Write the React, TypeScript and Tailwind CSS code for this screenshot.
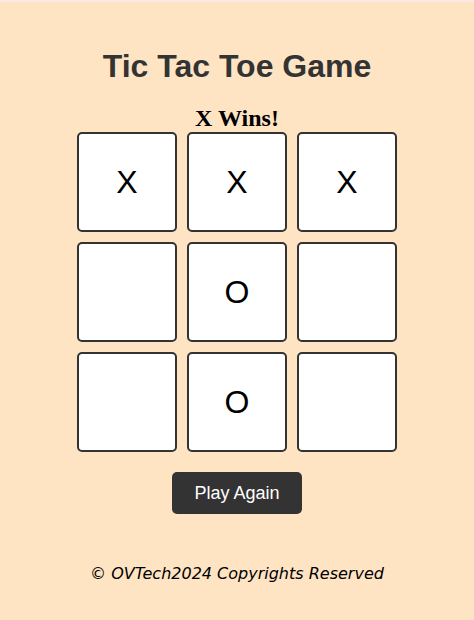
import React from "react";

const board = ["X", "X", "X", "", "O", "", "", "O", ""];

export default function App() {
  return (
    <div className="min-h-[620px] bg-[#ffe4c4] font-['Liberation_Sans',Arial,sans-serif]">
      <div className="h-[2px] bg-[#fbe7e3]" />
      <div className="flex flex-col items-center pt-[44px]">
        <h1 className="text-[32px] leading-[40px] font-bold text-[#333]">Tic Tac Toe Game</h1>
        <h2 className="mt-[18px] text-[24px] leading-[28px] font-bold text-black font-['Liberation_Serif','Times_New_Roman',serif]">
          X Wins!
        </h2>
        <div className="grid grid-cols-[repeat(3,100px)] gap-[10px]">
          {board.map((v, i) => (
            <div
              key={i}
              className="w-[100px] h-[100px] bg-white border-2 border-[#333] rounded-[5px] flex items-center justify-center text-[32px] text-black"
            >
              {v}
            </div>
          ))}
        </div>
        <button className="mt-[20px] h-[42px] w-[130px] bg-[#333] text-white text-[18px] rounded-[5px]">
          Play Again
        </button>
        <p className="mt-[50px] text-[16px] leading-[20px] italic text-black font-['DejaVu_Sans',Verdana,sans-serif]">
          © OVTech2024 Copyrights Reserved
        </p>
      </div>
    </div>
  );
}
